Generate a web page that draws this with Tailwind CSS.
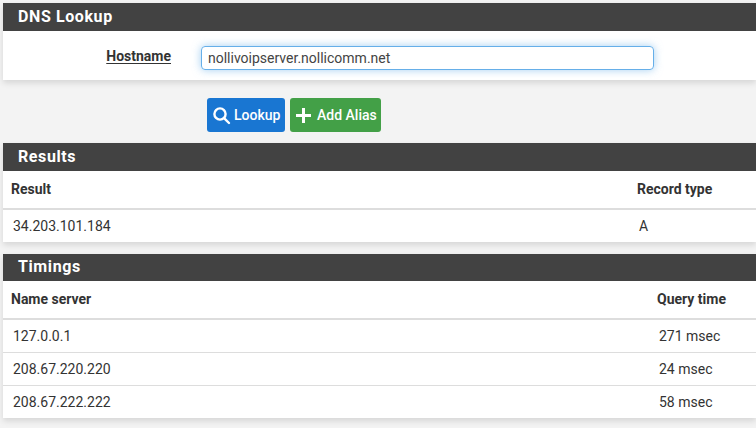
<!DOCTYPE html>
<html lang="en">
<head>
    <meta charset="UTF-8">
    <title>DNS Lookup</title>
    <script src="https://cdn.jsdelivr.net/npm/@tailwindcss/browser@4"></script>
</head>
<body class="bg-[#f3f3f3] h-[428px] overflow-hidden font-['Roboto',sans-serif] text-[14px] text-[#333]">
    <div class="pl-[3px] pt-[3px]">
        <!-- DNS Lookup -->
        <div class="bg-white shadow-[0_3px_6px_rgba(0,0,0,0.12)]">
            <h2 class="bg-[#424242] text-white h-[28px] leading-[27px] pl-[15px] text-[16px] font-bold tracking-[0.6px]">DNS Lookup</h2>
            <div class="h-[49px] flex items-start pt-[15px]">
                <label class="w-[168px] text-right font-bold leading-[20px] underline underline-offset-2">Hostname</label>
                <input type="text" value="nollivoipserver.nollicomm.net" class="ml-[30px] w-[453px] h-[24px] px-[6px] rounded-[4px] border border-[#66afe9] outline-none text-[14px] text-[#444] shadow-[0_0_8px_rgba(102,175,233,0.6)]">
            </div>
        </div>

        <div class="flex gap-[5px] pl-[204px] pt-[18px] h-[63px]">
            <button class="h-[34px] w-[78px] bg-[#1976d2] rounded-[3px] text-white flex items-center pl-[5px] gap-[3px] font-medium">
                <svg width="19" height="19" viewBox="0 0 19 19" fill="none" stroke="white" stroke-width="2.4" stroke-linecap="round"><circle cx="8" cy="8" r="5.6"/><path d="M12.3 12.3 L17 17"/></svg>
                Lookup
            </button>
            <button class="h-[34px] w-[91px] bg-[#43a047] rounded-[3px] text-white flex items-center pl-[5px] gap-[5px] font-medium">
                <svg width="17" height="17" viewBox="0 0 17 17" fill="white"><path d="M7 1 h3 v6 h6 v3 h-6 v6 h-3 v-6 h-6 v-3 h6 z"/></svg>
                Add Alias
            </button>
        </div>

        <!-- Results -->
        <div class="bg-white shadow-[0_3px_6px_rgba(0,0,0,0.12)] mt-[-0px]">
            <h2 class="bg-[#424242] text-white h-[28px] leading-[27px] pl-[15px] text-[16px] font-bold tracking-[0.6px]">Results</h2>
            <div class="flex h-[37px] items-center font-bold border-b-0">
                <div class="flex-1 pl-[8px]">Result</div>
                <div class="w-[119px]">Record type</div>
            </div>
            <div class="flex h-[34px] items-center border-t-2 border-[#ddd]">
                <div class="flex-1 pl-[10px]">34.203.101.184</div>
                <div class="w-[117px]">A</div>
            </div>
        </div>

        <!-- Timings -->
        <div class="bg-white shadow-[0_3px_6px_rgba(0,0,0,0.12)] mt-[12px]">
            <h2 class="bg-[#424242] text-white h-[27px] leading-[26px] pl-[15px] text-[16px] font-bold tracking-[0.6px]">Timings</h2>
            <div class="flex h-[37px] items-center font-bold">
                <div class="flex-1 pl-[8px]">Name server</div>
                <div class="w-[99px]">Query time</div>
            </div>
            <div class="flex h-[34px] items-center border-t-2 border-[#ddd]">
                <div class="flex-1 pl-[10px]">127.0.0.1</div>
                <div class="w-[97px]">271 msec</div>
            </div>
            <div class="flex h-[33px] items-center border-t border-[#ddd]">
                <div class="flex-1 pl-[10px]">208.67.220.220</div>
                <div class="w-[97px]">24 msec</div>
            </div>
            <div class="flex h-[33px] items-center border-t border-[#ddd]">
                <div class="flex-1 pl-[10px]">208.67.222.222</div>
                <div class="w-[97px]">58 msec</div>
            </div>
        </div>
    </div>
</body>
</html>
